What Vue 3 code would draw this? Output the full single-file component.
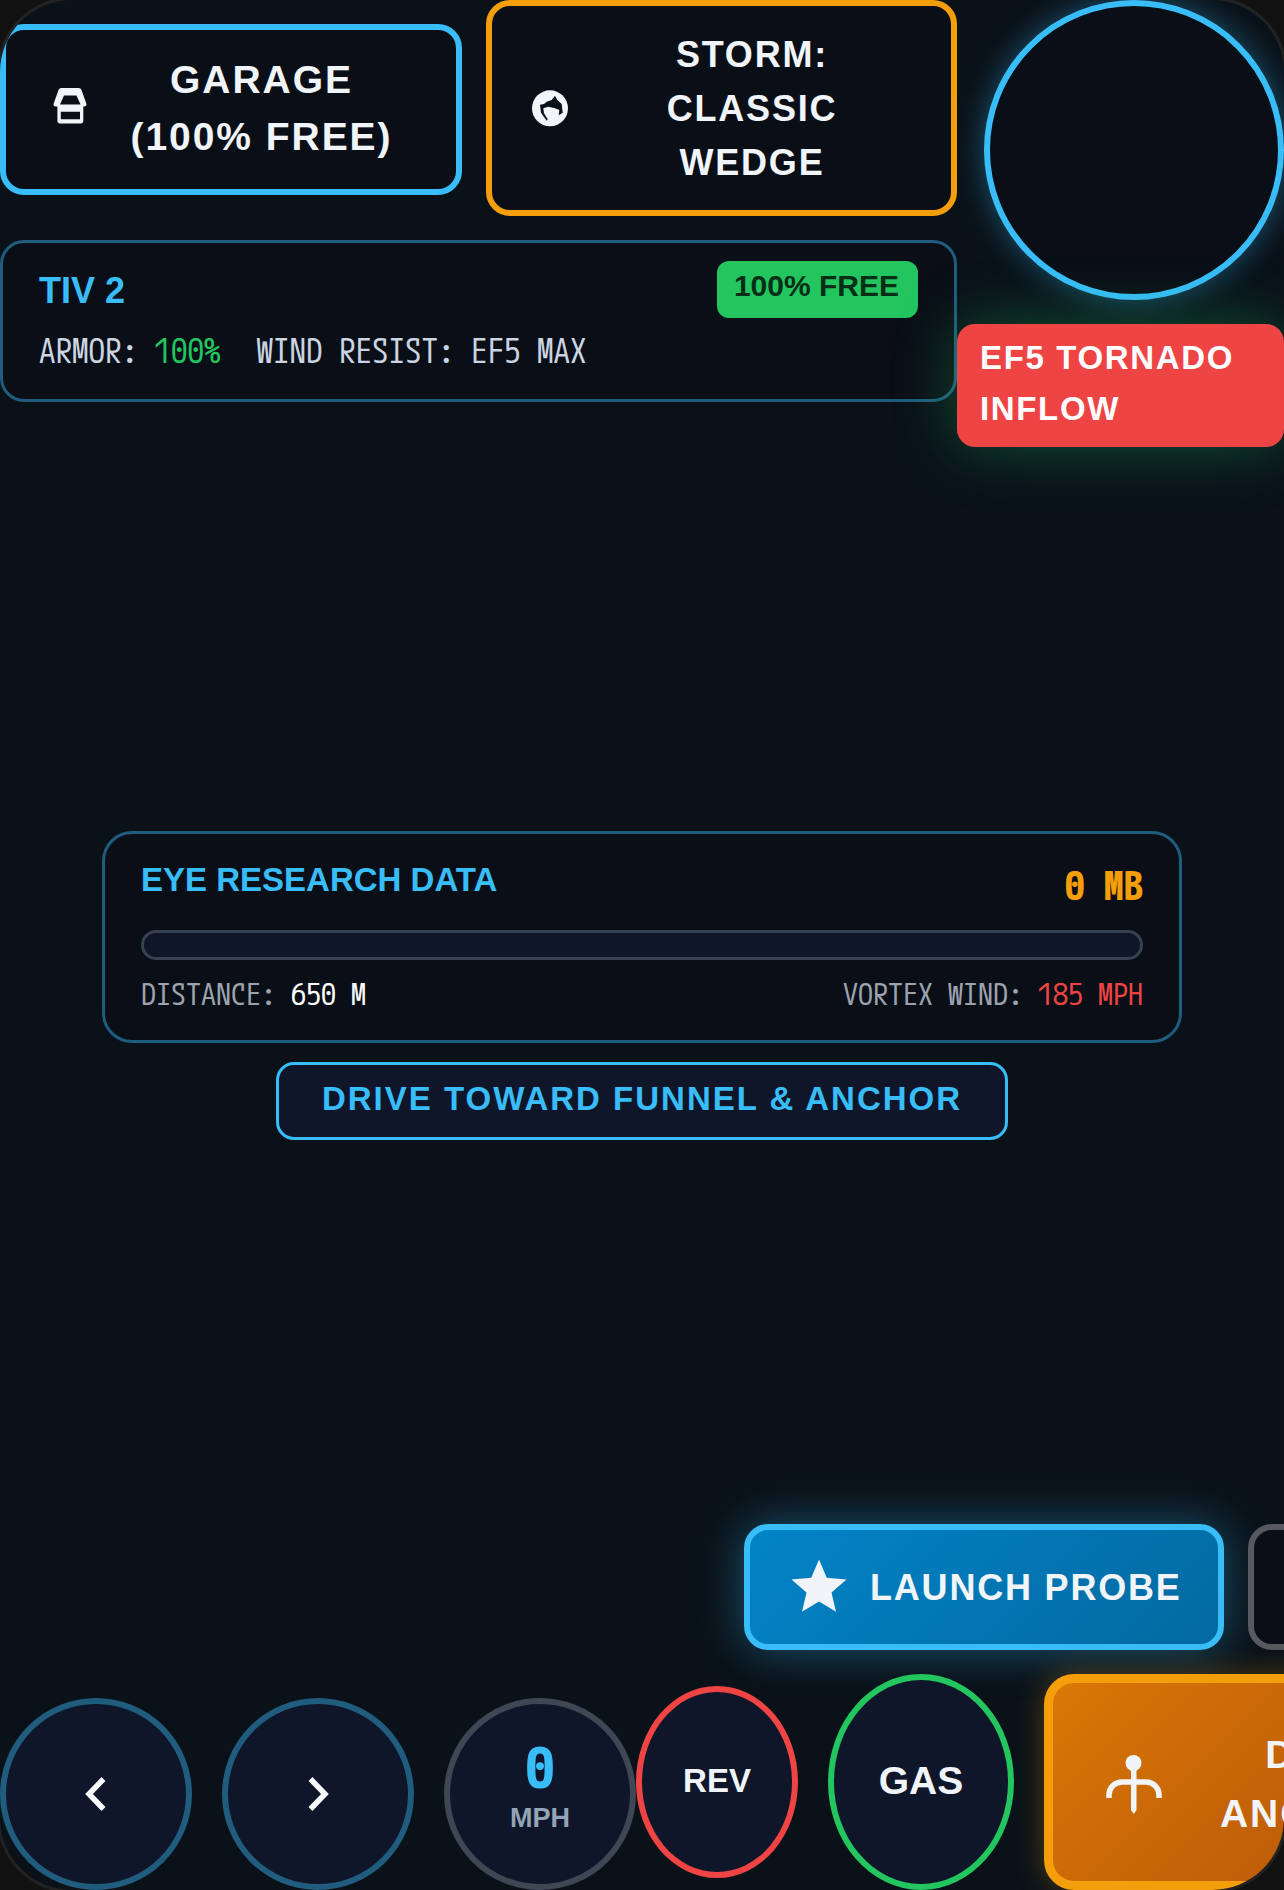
<script setup>
const meta = [
  { label: 'ARMOR:', value: '100%', cls: 'good' },
  { label: 'WIND RESIST:', value: 'EF5 MAX', cls: '' }
]
</script>

<template>
  <div class="frame">
    <section class="top">
      <div class="top-left">
        <div class="top-buttons">
          <button class="tbtn garage">
            <svg class="ticon" viewBox="0 0 42 42" width="42" height="42">
              <path fill="#f1f5f9" fill-rule="evenodd" d="M12.500 1h17c1.500 0 2.500.7 3 2L37.300 16.500c.6 1.700-.4 3-2.300 3h-.7v14.500c0 1.600-1 2.500-2.500 2.500H11c-1.600 0-2.600-1-2.600-2.500V19.500H7c-1.900 0-2.900-1.300-2.300-3L9.500 3c.5-1.300 1.500-2 3-2ZM15 8.500 11 17.500h20.500L27.500 8.500ZM11.800 24.800v7.400H31v-7.400Z"/>
            </svg>
            <span class="ttext">GARAGE<br />(100% FREE)</span>
          </button>
          <button class="tbtn storm">
            <svg class="ticon" viewBox="0 0 42 42" width="42" height="42">
              <circle cx="21" cy="20.300" r="18" fill="#f1f5f9"/>
              <path fill="#0a1119" d="M26 7.700 22.700 12 17.700 13.700 15 16 11 16.700 12 24.700 17.700 32.700 18.700 31.300 15 25.300 14.300 20.300 19.300 18.700 26 20.300 30.300 22 29.700 27.300 33.700 24.700 32.700 16 28.300 12Z"/>
            </svg>
            <span class="ttext">STORM:<br />CLASSIC<br />WEDGE</span>
          </button>
        </div>
        <div class="panel vehicle">
          <div class="vehicle-head">
            <span class="vehicle-name">TIV 2</span>
            <span class="badge">100% FREE</span>
          </div>
          <div class="vehicle-meta">
            <span v-for="m in meta" :key="m.label">{{ m.label }} <span :class="m.cls">{{ m.value }}</span></span>
          </div>
        </div>
      </div>
      <div class="top-right">
        <div class="radar"></div>
        <div class="alert">EF5 TORNADO INFLOW</div>
      </div>
    </section>

    <section class="research">
      <div class="panel data">
        <div class="data-head">
          <span class="data-title">EYE RESEARCH DATA</span>
          <span class="data-size">0 MB</span>
        </div>
        <div class="track"></div>
        <div class="data-foot">
          <span>DISTANCE: <span class="white">650 M</span></span>
          <span>VORTEX WIND: <span class="bad">185 MPH</span></span>
        </div>
      </div>
      <div class="hint">DRIVE TOWARD FUNNEL &amp; ANCHOR</div>
    </section>

    <section class="bottom">
      <div class="action-row">
        <button class="launch">
          <svg viewBox="0 0 24 24" width="66" height="66">
            <path fill="#f1f5f9" d="M12 17.270 18.180 21l-1.640-7.030L22 9.240l-7.190-.61L12 2 9.190 8.630 2 9.240l5.460 4.730L5.820 21z"/>
          </svg>
          <span class="launch-text">LAUNCH PROBE</span>
        </button>
        <button class="ghost"></button>
      </div>
      <div class="control-row">
        <div class="cluster">
          <button class="round steer">
            <svg viewBox="0 0 24 36" width="24" height="36"><path d="M19.500 3 5 18l14.500 15" fill="none" stroke="#f8fafc" stroke-width="5.500"/></svg>
          </button>
          <button class="round steer">
            <svg viewBox="0 0 24 36" width="24" height="36"><path d="M4.500 3 19 18 4.500 33" fill="none" stroke="#f8fafc" stroke-width="5.500"/></svg>
          </button>
          <div class="round speed">
            <span class="speed-val">0</span>
            <span class="speed-unit">MPH</span>
          </div>
        </div>
        <div class="pedals">
          <button class="pedal rev">REV</button>
          <button class="pedal gas">GAS</button>
        </div>
        <button class="anchor">
          <svg viewBox="0 0 72 72" width="72" height="72">
            <circle cx="35.500" cy="17" r="8" fill="#f1f5f9"/>
            <path fill="#f1f5f9" d="M33 20h5.500v44l-2.750 4-2.750-4z"/>
            <path fill="none" stroke="#f1f5f9" stroke-width="5.500" d="M11 52v-3a13 13 0 0 1 13-13h24a13 13 0 0 1 13 13v3"/>
          </svg>
          <span class="anchor-text">DROP<br />ANCHORS</span>
        </button>
      </div>
    </section>
  </div>
</template>

<style>
html, body { background: #111111; margin: 0; }
</style>

<style scoped>
.frame {
  width: 1284px;
  height: 1890px;
  box-sizing: border-box;
  background: #0a1119;
  border-radius: 72px;
  box-shadow: 0 0 0 3px #222222;
  overflow: hidden;
  display: flex;
  flex-direction: column;
  color: #f1f5f9;
  font-family: "Liberation Sans", Arial, sans-serif;
  line-height: 1.5;
}
button { font-family: inherit; color: inherit; padding: 0; margin: 0; box-sizing: border-box; }

.top { display: grid; grid-template-columns: 957px 327px; }
.top-left { display: flex; flex-direction: column; gap: 24px; }
.top-buttons { display: flex; gap: 24px; align-items: flex-start; }
.tbtn {
  display: flex; align-items: center;
  background: #0a0f17;
  border: 6px solid;
  border-radius: 24px;
  font-weight: 700;
  letter-spacing: 0.05em;
  text-align: center;
}
.ttext { flex: 1; }
.ticon { flex: none; }
.garage { width: 462px; height: 171px; margin-top: 24px; gap: 18px; border-color: #38bdf8; font-size: 39px; line-height: 57px; padding: 0 42px 3px 43px; }
.storm { width: 471px; height: 216px; gap: 23px; border-color: #f59e0b; font-size: 36px; line-height: 54px; padding: 1px 41px 0 37px; }

.panel { background: #0a0f17; border: 3px solid #1f5c7e; box-sizing: border-box; }
.vehicle { border-radius: 24px; height: 162px; padding: 18px 36px; }
.vehicle-head { display: flex; justify-content: space-between; align-items: flex-start; }
.vehicle-name { font-size: 36px; font-weight: 700; color: #38bdf8; line-height: 54px; margin-top: 3px; }
.badge {
  background: #22c55e; color: #052e16;
  font-size: 30px; font-weight: 700; line-height: 41px;
  padding: 4px 19px 12px 17px; border-radius: 12px;
}
.vehicle-meta, .data-size, .data-foot, .speed-val {
  font-family: "M PLUS 1 Code", "Noto Sans Mono CJK SC", monospace;
}
.vehicle-meta { display: flex; gap: 36px; margin-top: 8px; font-size: 33px; line-height: 49px; color: #cbd5e1; }
.good { color: #22c55e; }

.top-right { display: flex; flex-direction: column; gap: 24px; position: relative; }
.radar {
  width: 300px; height: 300px; box-sizing: border-box; margin-left: 27px;
  border: 6px solid #38bdf8; border-radius: 50%;
  background: #0a0f17;
  box-shadow: 0 0 30px rgba(56, 189, 248, 0.4);
}
.alert {
  background: #ef4444; color: #ffffff;
  font-size: 33px; font-weight: 700; letter-spacing: 0.05em; line-height: 51px;
  padding: 8px 23px 13px; border-radius: 18px;
  box-shadow: 0 0 60px rgba(34, 197, 94, 0.35);
}

.research { margin-top: 384px; display: flex; flex-direction: column; align-items: center; }
.data { width: 1080px; height: 212px; border-radius: 30px; padding: 18px 36px; }
.data-head { display: flex; justify-content: space-between; align-items: flex-start; height: 63px; }
.data-title { font-size: 33px; font-weight: 700; color: #38bdf8; line-height: 50px; margin-top: 3px; }
.data-size { font-size: 39px; font-weight: 700; color: #f59e0b; line-height: 59px; margin-top: 4px; }
.track {
  height: 30px; box-sizing: border-box; margin-top: 15px;
  border: 3px solid #374151; border-radius: 15px; background: #0f1629;
}
.data-foot { display: flex; justify-content: space-between; margin-top: 11px; font-size: 30px; line-height: 45px; color: #9ca3af; }
.white { color: #ffffff; }
.bad { color: #ef4444; }
.hint {
  margin-top: 19px; box-sizing: border-box; height: 78px;
  display: flex; align-items: center; padding: 0 43px 5px;
  background: #0f1629; border: 3px solid #38bdf8; border-radius: 18px;
  font-size: 33px; font-weight: 700; letter-spacing: 2px; color: #38bdf8;
}

.bottom { margin-top: auto; display: flex; flex-direction: column; gap: 24px; }
.action-row { display: flex; gap: 24px; padding-left: 744px; }
.launch {
  flex: none; width: 480px; height: 126px;
  display: flex; align-items: center; gap: 18px; padding-left: 36px;
  background: linear-gradient(135deg, #0284c7, #0369a1);
  border: 6px solid #38bdf8; border-radius: 24px;
  font-size: 36px; font-weight: 700; letter-spacing: 0.05em;
  box-shadow: 0 0 45px rgba(56, 189, 248, 0.4);
}
.launch-text { padding-top: 2px; }
.ghost { flex: none; width: 300px; height: 126px; background: #0a0f17; border: 6px solid #565a60; border-radius: 24px; }

.control-row { display: flex; align-items: flex-end; height: 216px; }
.cluster { display: flex; gap: 30px; flex: none; }
.round {
  width: 192px; height: 192px; box-sizing: border-box; flex: none;
  border-radius: 50%; border: 6px solid #1f5c7e; background: #0f1629;
  display: flex; flex-direction: column; align-items: center; justify-content: center;
}
.speed { border-color: #3f4654; padding-bottom: 14.5px; }
.speed-val { font-weight: 700; font-size: 57px; line-height: 60px; color: #38bdf8; }
.speed-unit { font-size: 27px; font-weight: 700; line-height: 40px; margin-top: 2.5px; color: #94a3b8; }
.pedals { display: flex; gap: 30px; align-items: center; height: 216px; flex: none; }
.pedal { border-radius: 50%; background: #0f1629; border: 6px solid; font-weight: 700; flex: none; padding-bottom: 2px; }
.rev { width: 162px; height: 192px; border-color: #ef4444; font-size: 33px; }
.gas { width: 186px; height: 216px; border-color: #22c55e; font-size: 39px; }
.anchor {
  flex: none; margin-left: 30px; width: 400px; height: 216px;
  display: flex; align-items: center; gap: 50px; padding-left: 45px;
  background: linear-gradient(135deg, #d97706, #b45309);
  border: 9px solid #f59e0b; border-radius: 30px;
  font-size: 39px; font-weight: 700; letter-spacing: 0.05em; line-height: 58.5px; text-align: center;
  box-shadow: 0 0 30px rgba(245, 158, 11, 0.3);
}
.anchor-text { padding-top: 5px; }
</style>
